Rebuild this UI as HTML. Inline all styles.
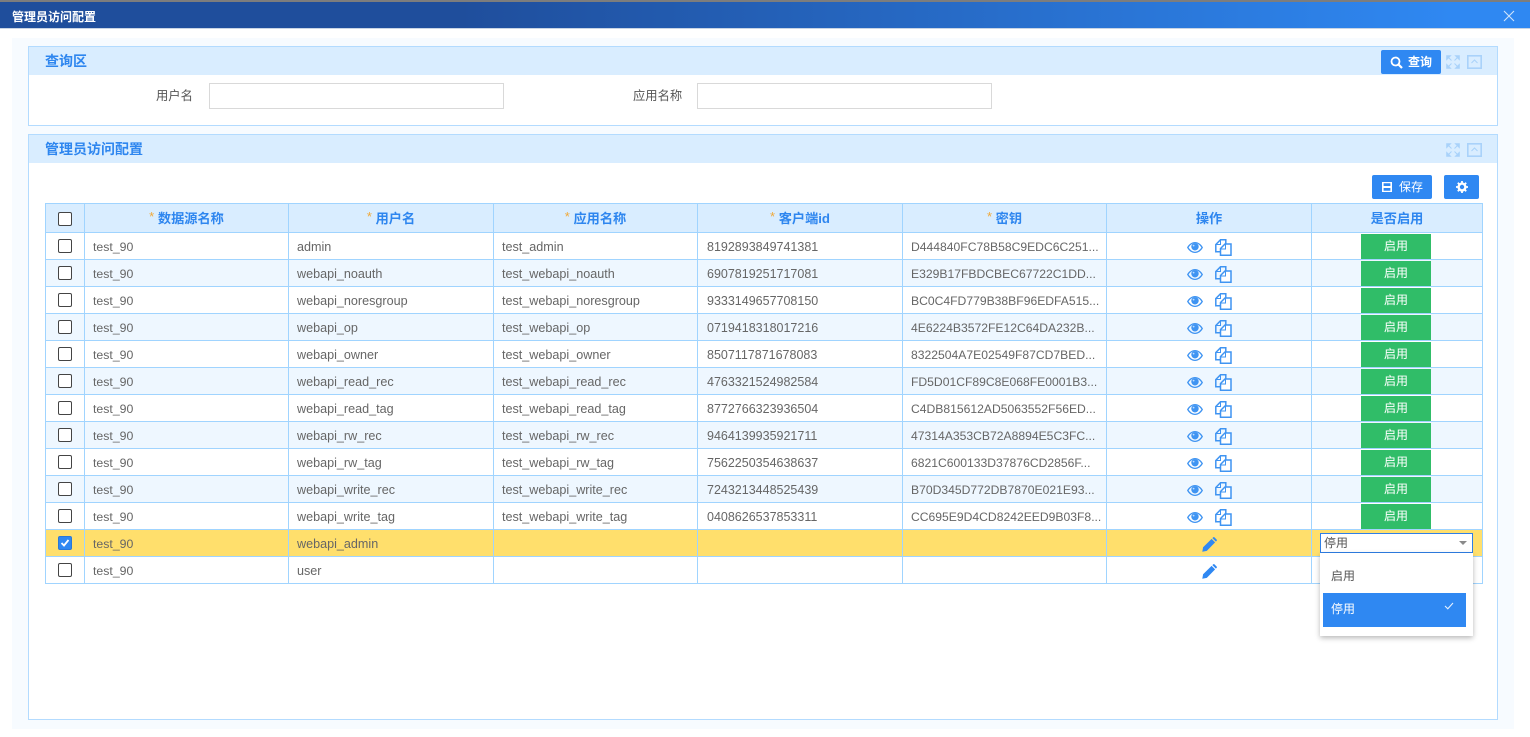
<!DOCTYPE html>
<html lang="zh"><head><meta charset="utf-8"><style>
*{box-sizing:border-box}
html,body{margin:0;padding:0;width:1530px;height:737px;overflow:hidden;background:#fff;font-family:"Liberation Sans","Noto Sans CJK SC",sans-serif;font-size:13px;color:#666}
.a{position:absolute}
.top{left:0;top:0;width:1530px;height:2px;background:#7d7d7d}
.bar{left:0;top:2px;width:1530px;height:27px;background:linear-gradient(90deg,#1f4e9c 0,#1f4e9c 30%,#2f88f2 95%,#2f88f2 100%);border-bottom:1px solid #c8d4e4}
.ttl{left:12px;top:7px;color:#fff;font-size:12px;line-height:17px;font-weight:bold}
.inner{left:12px;top:38px;width:1502px;height:691px;background:#f7fbff}
.panel{left:28px;width:1470px;background:#fff;border:1px solid #b3dbff}
.phead{left:0;top:0;width:1468px;height:28px;background:#d9edff}
.ptitle{left:16px;top:4px;font-size:14px;line-height:20px;color:#2e86ef;font-weight:bold}
.inp{top:83px;height:26px;background:#fff;border:1px solid #d9d9d9}
.lab{top:87px;font-size:12.3px;line-height:18px;color:#555}
.btn{background:#2f88f2;border-radius:2px;color:#fff;font-size:12px;font-weight:bold;height:24px;line-height:24px}
table{position:absolute;left:45px;top:203px;border-collapse:collapse;table-layout:fixed;width:1437px}
td,th{border:1px solid #a0d4ff;padding:2px 8px 0;height:27px;white-space:nowrap;overflow:hidden;font-weight:normal;font-size:12.5px;line-height:14px;vertical-align:middle}
td:nth-child(2){font-size:12.3px}
td:nth-child(3),td:nth-child(4){font-size:12.6px}
td:nth-child(5){padding-left:9px}
td:nth-child(6){font-size:12.15px}
tr.h th{height:29px;background:#d9edff;color:#2e86ef;font-weight:bold;font-size:13.2px;text-align:center;padding:2px 0 0}
th i{color:#f0a93a;font-style:normal;font-weight:normal;font-size:13px;position:relative;top:-2px}
tr.z td{background:#eef7ff}
tr.y td{background:#ffdf6c}
td.c{padding:0;text-align:center}
.cb{display:block;width:14px;height:14px;margin:0 auto;border:1px solid #444;border-radius:2px;background:#fff}
.cb.on{background:#2f88f2;border-color:#2a78d8;position:relative}
td.o{padding:0;text-align:center;font-size:0}
td.o svg{vertical-align:middle;position:relative;top:1px}
td.o svg.e{top:1px}
td.o svg.k{top:1px;margin-left:12px}
td.s{padding:0}
.g{display:block;margin-left:49px;width:70px;height:25px;background:#30bd68;color:#fff;font-size:12px;line-height:25px;text-align:center}
.sel{left:1320px;top:533px;width:153px;height:20px;background:#fff;border:1px solid #2f7fe6;font-size:12px;line-height:18px;padding-left:3px;color:#555}
.caret{left:1459px;top:541px;width:0;height:0;border:4.5px solid transparent;border-top:4px solid #8a8a8a;border-bottom:0}
.menu{left:1320px;top:553px;width:153px;height:83px;background:#fff;box-shadow:0 2px 5px rgba(0,0,0,.28);font-size:12px}
.m1{left:11px;top:15px;line-height:16px;color:#555}
.m2{left:3px;top:40px;width:143px;height:34px;background:#2f88f2;color:#fff;line-height:33px;padding-left:8px}
</style></head><body>
<svg width="0" height="0" style="position:absolute"><defs>
<symbol id="eye" viewBox="0 0 16 11"><path d="M0 5.5C2 2 4.8 0 8 0S14 2 16 5.5C14 9 11.2 11 8 11S2 9 0 5.5ZM1.6 5.5C3.4 8.2 5.5 9.7 8 9.7S12.6 8.2 14.4 5.5C12.6 2.8 10.5 1.3 8 1.3S3.4 2.8 1.6 5.5Z" fill="#3f94f2"/><circle cx="8" cy="4.8" r="3.7" fill="#3f94f2"/><circle cx="6.6" cy="3.6" r=".9" fill="#bcdcff"/></symbol>
<symbol id="cp" viewBox="0 0 17 17"><path d="M5 12.8H.8V5.5L5.5 .8H10.8V5" fill="none" stroke="#3f94f2" stroke-width="1.5"/><path d="M5.5 1V5.5H1" fill="none" stroke="#3f94f2" stroke-width="1"/><path d="M5.5 16.2V9.5L10 5H16V16.2Z" fill="#fff" stroke="#3f94f2" stroke-width="1.5"/><path d="M10.5 5V10H5.5" fill="none" stroke="#3f94f2" stroke-width="1"/></symbol>
<symbol id="pen" viewBox="0 0 15 15"><path d="M.3 14.7 1.1 10.2 9.6 1.9 13.1 5.4 4.8 13.9Z" fill="#2f88f2"/><path d="M10.4 1.1 11.2.3Q11.8-.1 12.4.3L14.7 2.6Q15.1 3.2 14.7 3.8L13.9 4.6Z" fill="#2f88f2"/></symbol>
</defs></svg>

<div class="a top"></div>
<div class="a bar"><div class="a ttl">管理员访问配置</div>
<svg class="a" style="left:1503px;top:8px" width="12" height="12" viewBox="0 0 12 12"><path d="M1 1 11 11M11 1 1 11" stroke="#cfe4fb" stroke-width="1.1" fill="none"/></svg></div>
<div class="a inner"></div>

<div class="a panel" style="top:46px;height:80px"><div class="a phead"></div><div class="a ptitle">查询区</div></div>
<div class="a lab" style="left:156px">用户名</div><div class="a inp" style="left:209px;width:295px"></div>
<div class="a lab" style="left:633px">应用名称</div><div class="a inp" style="left:697px;width:295px"></div>
<div class="a btn" style="left:1381px;top:50px;width:60px"><svg class="a" style="left:9px;top:6px" width="13" height="13" viewBox="0 0 13 13"><circle cx="5.5" cy="5.5" r="4" fill="none" stroke="#fff" stroke-width="1.8"/><path d="M8.5 8.5 12 12" stroke="#fff" stroke-width="2.2"/></svg><span class="a" style="left:27px;top:0">查询</span></div>
<svg class="a" style="left:1446px;top:55px" width="14" height="14" viewBox="0 0 14 14"><path d="M.5 5V.5H5L.5 5ZM13.5 5V.5H9ZM.5 9V13.5H5ZM13.5 9V13.5H9Z" fill="#a9d2fa" stroke="#a9d2fa" stroke-width=".6"/><path d="M2 2 5.5 5.5M12 2 8.5 5.5M2 12 5.5 8.5M12 12 8.5 8.5" stroke="#a9d2fa" stroke-width="1"/></svg>
<svg class="a" style="left:1467px;top:55px" width="15" height="14" viewBox="0 0 15 14"><rect x=".8" y=".8" width="13.4" height="12.4" fill="none" stroke="#a9d2fa" stroke-width="1.6"/><path d="M4.5 8 7.5 5 10.5 8" fill="none" stroke="#a9d2fa"/></svg>

<div class="a panel" style="top:134px;height:586px"><div class="a phead"></div><div class="a ptitle">管理员访问配置</div></div>
<svg class="a" style="left:1446px;top:143px" width="14" height="14" viewBox="0 0 14 14"><path d="M.5 5V.5H5L.5 5ZM13.5 5V.5H9ZM.5 9V13.5H5ZM13.5 9V13.5H9Z" fill="#a9d2fa" stroke="#a9d2fa" stroke-width=".6"/><path d="M2 2 5.5 5.5M12 2 8.5 5.5M2 12 5.5 8.5M12 12 8.5 8.5" stroke="#a9d2fa" stroke-width="1"/></svg>
<svg class="a" style="left:1467px;top:143px" width="15" height="14" viewBox="0 0 15 14"><rect x=".8" y=".8" width="13.4" height="12.4" fill="none" stroke="#a9d2fa" stroke-width="1.6"/><path d="M4.5 8 7.5 5 10.5 8" fill="none" stroke="#a9d2fa"/></svg>

<div class="a btn" style="left:1372px;top:175px;width:60px"><svg class="a" style="left:10px;top:7px" width="10" height="10" viewBox="0 0 10 10"><path d="M0 0H10V10H0ZM1.6 1.3V4H8.4V1.3ZM1.6 6V8.7H8.4V6Z" fill="#fff" fill-rule="evenodd"/></svg><span class="a" style="left:27px;top:0;font-weight:normal">保存</span></div>
<div class="a btn" style="left:1444px;top:175px;width:35px"><svg class="a" style="left:12px;top:6px" width="12" height="12" viewBox="0 0 12 12"><circle cx="6" cy="6" r="3.4" fill="none" stroke="#fff" stroke-width="2.4"/><path d="M6 0V12M0 6H12M1.8 1.8 10.2 10.2M10.2 1.8 1.8 10.2" stroke="#fff" stroke-width="1.8" stroke-dasharray="2.2 7.6 2.2"/></svg></div>

<table><colgroup><col style="width:39px"><col style="width:204px"><col style="width:205px"><col style="width:204px"><col style="width:205px"><col style="width:204px"><col style="width:205px"><col style="width:171px"></colgroup>
<tr class="h"><th class="c"><span class="cb"></span></th><th><i>*</i> 数据源名称</th><th><i>*</i> 用户名</th><th><i>*</i> 应用名称</th><th><i>*</i> 客户端id</th><th><i>*</i> 密钥</th><th>操作</th><th>是否启用</th></tr>
<tr><td class="c"><span class="cb"></span></td><td>test_90</td><td>admin</td><td>test_admin</td><td>8192893849741381</td><td>D444840FC78B58C9EDC6C251...</td><td class="o"><svg class="e" width="16" height="11"><use href="#eye"/></svg><svg class="k" width="17" height="17"><use href="#cp"/></svg></td><td class="s"><span class="g">启用</span></td></tr>
<tr class="z"><td class="c"><span class="cb"></span></td><td>test_90</td><td>webapi_noauth</td><td>test_webapi_noauth</td><td>6907819251717081</td><td>E329B17FBDCBEC67722C1DD...</td><td class="o"><svg class="e" width="16" height="11"><use href="#eye"/></svg><svg class="k" width="17" height="17"><use href="#cp"/></svg></td><td class="s"><span class="g">启用</span></td></tr>
<tr><td class="c"><span class="cb"></span></td><td>test_90</td><td>webapi_noresgroup</td><td>test_webapi_noresgroup</td><td>9333149657708150</td><td>BC0C4FD779B38BF96EDFA515...</td><td class="o"><svg class="e" width="16" height="11"><use href="#eye"/></svg><svg class="k" width="17" height="17"><use href="#cp"/></svg></td><td class="s"><span class="g">启用</span></td></tr>
<tr class="z"><td class="c"><span class="cb"></span></td><td>test_90</td><td>webapi_op</td><td>test_webapi_op</td><td>0719418318017216</td><td>4E6224B3572FE12C64DA232B...</td><td class="o"><svg class="e" width="16" height="11"><use href="#eye"/></svg><svg class="k" width="17" height="17"><use href="#cp"/></svg></td><td class="s"><span class="g">启用</span></td></tr>
<tr><td class="c"><span class="cb"></span></td><td>test_90</td><td>webapi_owner</td><td>test_webapi_owner</td><td>8507117871678083</td><td>8322504A7E02549F87CD7BED...</td><td class="o"><svg class="e" width="16" height="11"><use href="#eye"/></svg><svg class="k" width="17" height="17"><use href="#cp"/></svg></td><td class="s"><span class="g">启用</span></td></tr>
<tr class="z"><td class="c"><span class="cb"></span></td><td>test_90</td><td>webapi_read_rec</td><td>test_webapi_read_rec</td><td>4763321524982584</td><td>FD5D01CF89C8E068FE0001B3...</td><td class="o"><svg class="e" width="16" height="11"><use href="#eye"/></svg><svg class="k" width="17" height="17"><use href="#cp"/></svg></td><td class="s"><span class="g">启用</span></td></tr>
<tr><td class="c"><span class="cb"></span></td><td>test_90</td><td>webapi_read_tag</td><td>test_webapi_read_tag</td><td>8772766323936504</td><td>C4DB815612AD5063552F56ED...</td><td class="o"><svg class="e" width="16" height="11"><use href="#eye"/></svg><svg class="k" width="17" height="17"><use href="#cp"/></svg></td><td class="s"><span class="g">启用</span></td></tr>
<tr class="z"><td class="c"><span class="cb"></span></td><td>test_90</td><td>webapi_rw_rec</td><td>test_webapi_rw_rec</td><td>9464139935921711</td><td>47314A353CB72A8894E5C3FC...</td><td class="o"><svg class="e" width="16" height="11"><use href="#eye"/></svg><svg class="k" width="17" height="17"><use href="#cp"/></svg></td><td class="s"><span class="g">启用</span></td></tr>
<tr><td class="c"><span class="cb"></span></td><td>test_90</td><td>webapi_rw_tag</td><td>test_webapi_rw_tag</td><td>7562250354638637</td><td>6821C600133D37876CD2856F...</td><td class="o"><svg class="e" width="16" height="11"><use href="#eye"/></svg><svg class="k" width="17" height="17"><use href="#cp"/></svg></td><td class="s"><span class="g">启用</span></td></tr>
<tr class="z"><td class="c"><span class="cb"></span></td><td>test_90</td><td>webapi_write_rec</td><td>test_webapi_write_rec</td><td>7243213448525439</td><td>B70D345D772DB7870E021E93...</td><td class="o"><svg class="e" width="16" height="11"><use href="#eye"/></svg><svg class="k" width="17" height="17"><use href="#cp"/></svg></td><td class="s"><span class="g">启用</span></td></tr>
<tr><td class="c"><span class="cb"></span></td><td>test_90</td><td>webapi_write_tag</td><td>test_webapi_write_tag</td><td>0408626537853311</td><td>CC695E9D4CD8242EED9B03F8...</td><td class="o"><svg class="e" width="16" height="11"><use href="#eye"/></svg><svg class="k" width="17" height="17"><use href="#cp"/></svg></td><td class="s"><span class="g">启用</span></td></tr>
<tr class="y"><td class="c"><span class="cb on"><svg class="a" style="left:1px;top:1px" width="10" height="10" viewBox="0 0 10 10"><path d="M1.5 5 4 7.5 8.5 2" fill="none" stroke="#fff" stroke-width="1.8"/></svg></span></td><td>test_90</td><td>webapi_admin</td><td></td><td></td><td></td><td class="o"><svg width="15" height="15"><use href="#pen"/></svg></td><td></td></tr>
<tr><td class="c"><span class="cb"></span></td><td>test_90</td><td>user</td><td></td><td></td><td></td><td class="o"><svg width="15" height="15"><use href="#pen"/></svg></td><td></td></tr>
</table>

<div class="a sel">停用</div><div class="a caret"></div>
<div class="a menu"><div class="a m1">启用</div><div class="a m2">停用<svg class="a" style="left:121px;top:9px" width="10" height="8" viewBox="0 0 10 8"><path d="M1 4 3.8 6.8 9 1" fill="none" stroke="#e4f0ff" stroke-width="1.1"/></svg></div></div>
</body></html>
